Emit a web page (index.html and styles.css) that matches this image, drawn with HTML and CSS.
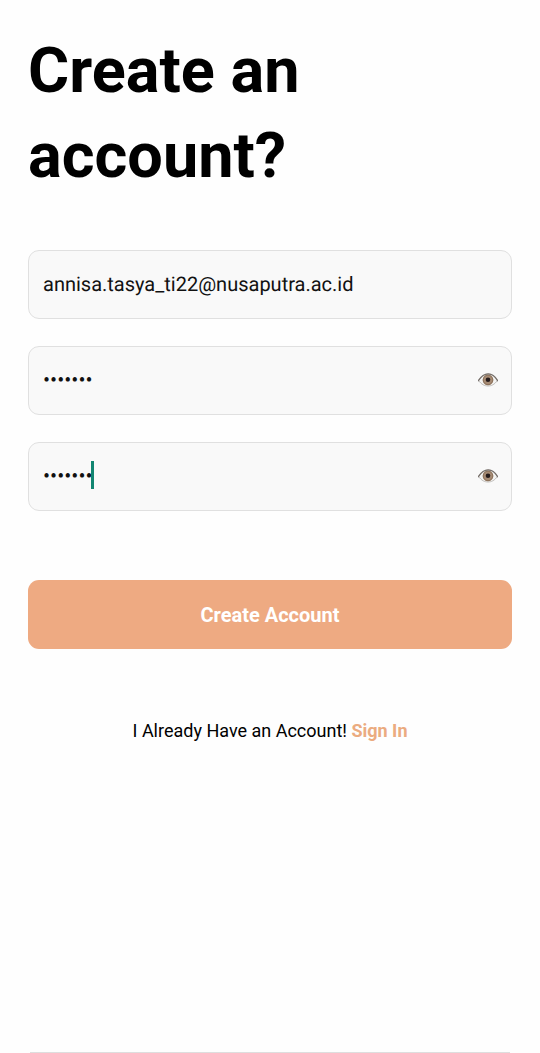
FILE: index.html
```html
<!DOCTYPE html>
<html lang="en">
<head>
<meta charset="utf-8">
<meta name="viewport" content="width=device-width, initial-scale=1">
<title>Create an account</title>
<link rel="stylesheet" href="styles.css">
</head>
<body>
<svg class="symbols" aria-hidden="true">
  <symbol id="eye" viewBox="0 0 20 16">
    <path d="M.6 8.600C4 3.500 7 2 10.300 2s6.400 2 9.100 6.600C16.500 12.500 13.500 14 10 14S3.500 12.500.6 8.600z" fill="#f4f4f3" stroke="#aaa7a4" stroke-width=".7"/>
    <circle cx="10" cy="7.900" r="5.300" fill="#a58a73"/>
    <circle cx="10" cy="7.900" r="4.800" fill="none" stroke="#80664f" stroke-width=".7"/>
    <circle cx="10" cy="7.700" r="2.300" fill="#241b1b"/>
    <path d="M.4 8.700C3.600 3.600 6.800 1.900 10.200 1.900s6.700 2 9.400 6.800" fill="none" stroke="#77706b" stroke-width="1.300" stroke-linecap="round"/>
  </symbol>
</svg>
<main class="page">
  <h1 class="title">Create an<br>account?</h1>
  <form class="form">
    <div class="fields">
      <div class="field">
        <input class="input" type="email" aria-label="Email" value="annisa.tasya_ti22@nusaputra.ac.id">
      </div>
      <div class="field">
        <input class="input password" type="password" aria-label="Password" value="1234567">
        <button class="toggle" type="button" aria-label="Show password"><svg class="eye"><use href="#eye"/></svg></button>
      </div>
      <div class="field">
        <input class="input password" type="password" aria-label="Confirm password" value="1234567">
        <span class="caret"></span>
        <button class="toggle" type="button" aria-label="Show confirmed password"><svg class="eye"><use href="#eye"/></svg></button>
      </div>
    </div>
    <button class="submit" type="submit">Create Account</button>
  </form>
  <p class="signin">I Already Have an Account! <a class="link" href="#">Sign In</a></p>
  <hr class="divider">
</main>
</body>
</html>
```
FILE: styles.css
```css
* {
  box-sizing: border-box;
}

body {
  margin: 0;
  background: #fefefe;
  color: #000;
  font-family: Roboto, "Liberation Sans", sans-serif;
}

.symbols {
  position: absolute;
  width: 0;
  height: 0;
}

.page {
  display: flex;
  flex-direction: column;
  min-height: 100vh;
  padding: 28px 28px 0;
}

.title {
  margin: 0 0 52px;
  font-size: 63px;
  font-weight: 700;
  line-height: 85px;
}

.form {
  display: flex;
  flex-direction: column;
  gap: 69px;
}

.fields {
  display: flex;
  flex-direction: column;
  gap: 27px;
}

.field {
  position: relative;
  display: flex;
  align-items: center;
  padding: 0 13px 0 14px;
  border: 1px solid #e0e0e0;
  border-radius: 11px;
  background: #f9f9f9;
}

.input {
  flex: 1;
  min-width: 0;
  height: 67px;
  padding: 0 0 2px;
  border: 0;
  outline: 0;
  background: transparent;
  color: #111;
  font: 400 20px/28px Roboto, "Liberation Sans", sans-serif;
  text-rendering: geometricPrecision;
}

.password {
  padding: 0;
  font-size: 21px;
}

.caret {
  position: absolute;
  left: 62px;
  top: 18px;
  width: 3px;
  height: 28px;
  background: #128671;
}

.toggle {
  display: flex;
  padding: 0 0 2px;
  border: 0;
  background: transparent;
}

.eye {
  width: 20px;
  height: 16px;
}

.submit {
  height: 69px;
  border: 0;
  border-radius: 11px;
  background: #eeaa82;
  color: #fff;
  font: 700 20px/28px Roboto, "Liberation Sans", sans-serif;
}

.signin {
  margin: 70px 0 0;
  font-size: 18px;
  line-height: 24px;
  text-align: center;
}

.link {
  color: #ebab80;
  font-weight: 700;
  text-decoration: none;
}

.divider {
  width: calc(100% - 4px);
  margin: auto auto 0;
  border: 0;
  border-top: 1px solid #dedede;
}
```
